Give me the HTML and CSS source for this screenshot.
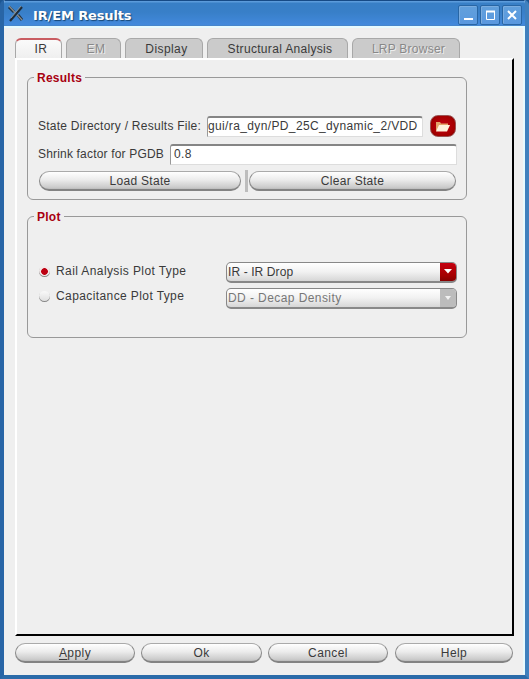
FILE: index.html
```html
<!DOCTYPE html>
<html lang="en">
<head>
<meta charset="utf-8">
<title>IR/EM Results</title>
<link rel="stylesheet" href="styles.css">
</head>
<body>
<div class="window">
  <header class="titlebar">
    <svg class="app-icon" width="18" height="18" viewBox="0 0 18 18"><path d="M2 2l5 5M11 10l4 5" stroke="#243545" stroke-width="3"/><path d="M2 1l13 14" stroke="#8a8d8c" stroke-width="1.2"/><path d="M15 2L3 16" stroke="#202c38" stroke-width="2.2"/><path d="M14 1L4 13" stroke="#9b998f" stroke-width=".8"/></svg>
    <h1>IR/EM Results</h1>
    <div class="controls">
      <button aria-label="Minimize"><svg width="18" height="18"><path d="M5 13h9" stroke="#fff" stroke-width="2"/></svg></button>
      <button aria-label="Maximize"><svg width="18" height="18"><path d="M5.5 6v7.5h8V6" fill="none" stroke="#fff"/><path d="M5 5.5h9" stroke="#fff" stroke-width="2"/></svg></button>
      <button aria-label="Close"><svg width="18" height="18"><path d="M5 5l8 8M13 5l-8 8" stroke="#fff" stroke-width="2"/></svg></button>
    </div>
  </header>
  <main>
    <nav class="tabs">
      <div class="tab ir active"><span>IR</span></div>
      <div class="tab em disabled"><span>EM</span></div>
      <div class="tab display"><span>Display</span></div>
      <div class="tab structural"><span>Structural Analysis</span></div>
      <div class="tab lrp disabled"><span>LRP Browser</span></div>
    </nav>
    <section class="pane">
      <fieldset class="results">
        <legend>Results</legend>
        <div class="row file-row"><label class="file-label">State Directory / Results File:</label><div class="input path"><span>gui/ra_dyn/PD_25C_dynamic_2/VDD</span></div>
          <button class="browse" aria-label="Browse"><svg width="16" height="13" viewBox="0 0 16 13"><path d="M1 11V2h4l1 1.5h7V6" fill="#e3a46a"/><path d="M1 11.5L4 5h11l-3 6.5z" fill="#fff1dc"/></svg></button></div>
        <div class="row shrink-row"><label class="shrink-label">Shrink factor for PGDB</label><div class="input factor">0.8</div></div>
        <div class="row action-row"><button class="pill load">Load State</button><i class="divider"></i><button class="pill clear">Clear State</button></div>
      </fieldset>
      <fieldset class="plot">
        <legend>Plot</legend>
        <div class="row plot-row"><i class="radio on"></i><label class="rail">Rail Analysis Plot Type</label><div class="combo"><span class="value">IR - IR Drop</span><b><svg width="8" height="5"><path d="M0 0h8L4 4.5z" fill="#fff"/></svg></b></div></div>
        <div class="row plot-row second"><i class="radio"></i><label class="cap">Capacitance Plot Type</label><div class="combo off"><span>DD - Decap Density</span><b><svg width="6" height="4"><path d="M0 0h6L3 4z" fill="#f2f2f2"/></svg></b></div></div>
      </fieldset>
    </section>
    <footer><button class="pill"><span><u>A</u>pply</span></button><button class="pill">Ok</button><button class="pill">Cancel</button><button class="pill">Help</button></footer>
  </main>
</div>
</body>
</html>
```
FILE: styles.css
```css
* { box-sizing: border-box; }
body { margin: 0; font: 12px/14px "Liberation Sans", sans-serif; color: #3a3a3a; letter-spacing: .42px; background: #1d5591; }
button { font: inherit; color: inherit; letter-spacing: inherit; padding: 0; border: 0; }
.window { width: 529px; height: 679px; border: solid; border-width: 0 4px 4px; border-color: #1e5b9e #3f80bd #2b6ba9 #2865a6; border-radius: 5px 5px 0 0; overflow: hidden; background: #efefef; }
.titlebar { height: 27px; display: flex; align-items: center; padding: 3px 3px 0 3px; background: linear-gradient(#164a86 0 1px, #5b9bdb 1px 2px, #387fc6 3px, #387fc8 12px, #4289dc 25px, #4a83bb 26px); }
.app-icon { display: block; position: relative; top: -1px; }
h1 { margin: 2px 0 0 8px; color: #fff; font: bold 13px/16px "DejaVu Sans", sans-serif; letter-spacing: -.13px; text-shadow: 1px 1px 1px #164674; }
.controls { margin-left: auto; display: flex; gap: 2px; margin-top: -1px; }
.controls button { width: 20px; height: 20px; border: 1px solid #2866a5; border-radius: 2px; background: linear-gradient(#62a0dc, #5998df); box-shadow: inset 1px 1px #7aacdf; }
.controls svg { display: block; }
main { height: 648px; padding: 10px 7px 0 11px; border-top: 2px solid #e6faff; border-right: 2px solid #e6faff; margin-top: -1px; }
.tabs { height: 20px; display: flex; gap: 4px; }
.tab { height: 20px; text-align: center; line-height: 20px; border: 1px solid #a8a8a8; border-bottom: 0; border-radius: 6px 6px 0 0; background: #cbcbcb; padding: 0 0 0 5px; }
.tab.active { background: linear-gradient(#fafafa, #efefef); border-top: 2px solid #c95c61; line-height: 18px; }
.tab.disabled { color: #888; text-shadow: 1px 1px #eee; }
.ir { width: 47px; }
.em { width: 55px; }
.display { width: 78px; }
.structural { width: 141px; letter-spacing: .32px; }
.lrp { width: 108px; letter-spacing: .25px; }
.pane { width: 499px; height: 578px; border: 2px solid; border-color: #fff #000 #000 #fff; padding: 10px 10px 0; background: #efefef; }
fieldset { position: relative; margin: 0; width: 440px; border: 0; padding: 0 10px 0 11px; }
fieldset::before { content: ""; position: absolute; inset: 7px 0 0; border: 1px solid #999; border-radius: 6px; pointer-events: none; }
legend { position: absolute; left: 7px; top: 1px; padding: 0 3px; font-weight: bold; color: #a80010; background: #efefef; letter-spacing: .25px; }
.results { height: 130px; padding-top: 45px; }
.plot { height: 129px; padding-top: 52px; margin-top: 9px; }
.row { display: flex; align-items: center; position: relative; }
.row label { white-space: pre; flex: none; }
.file-row { height: 22px; }
.file-label { width: 169px; letter-spacing: .25px; }
.input { height: 21px; border: 1px solid #ddd; border-top: 2px solid #858585; border-left-color: #999; border-radius: 3px 3px 0 0; background: #fff; white-space: nowrap; padding: 1px 0 0; }
.path { width: 216px; overflow: hidden; letter-spacing: .37px; }
.browse { width: 26px; height: 22px; margin-left: 7px; display: grid; place-items: center; border: 1px solid #9c5555; border-radius: 8px; background: radial-gradient(#c60014, #a40000 70%, #750000); }
.shrink-row { height: 21px; margin-top: 7px; }
.shrink-label { width: 132px; letter-spacing: .18px; position: relative; top: -1px; }
.factor { width: 287px; padding-left: 3px; }
.action-row { height: 22px; margin-top: 5px; padding-left: 1px; gap: 4px; letter-spacing: .3px; }
.pill { height: 20px; padding-top: 1px; border: 1px solid #888; border-top-color: #aaa; border-bottom: 2px solid #838383; border-radius: 10px; background: linear-gradient(#fff, #ececec 45%, #cbcbcb 90%, #bbb); line-height: 16px; text-align: center; }
.load { width: 202px; }
.divider { width: 3px; height: 22px; background: #bdbdbd; margin-right: -3px; }
.clear { width: 207px; }
.plot-row { height: 22px; margin-bottom: 4px; }
.plot-row label { width: 170px; position: relative; top: -1px; letter-spacing: .4px; }
.second label { top: -2px; }
.radio { width: 11px; height: 11px; margin: 0 6px 0 1px; border-radius: 50%; background: linear-gradient(#f9f9f9, #ddd); box-shadow: inset 0 -1px #888; position: relative; top: -1px; }
.second .radio { top: -2px; }
.radio.on { background: radial-gradient(circle, #bd0012 0 3px, #f2e9e9 3.7px); }
.combo { width: 231px; height: 21px; display: flex; justify-content: space-between; overflow: hidden; border: 1px solid #888; border-bottom: 2px solid #888; border-radius: 5px; background: linear-gradient(#fff, #f1f1f1 50%, #d6d6d6); line-height: 18px; padding-left: 1px; }
.value { letter-spacing: .1px; }
.combo b { width: 16px; display: grid; place-items: center; background: linear-gradient(#c50010, #a40000 70%, #860000); }
.combo.off { color: #777; }
.off b { background: #bcbcbc; }
footer { display: flex; margin-top: 7px; gap: 6px; }
footer .pill { width: 120px; }
footer .pill:nth-child(2) { width: 121px; }
footer .pill:nth-child(4) { width: 118px; margin-left: 1px; }
u { text-underline-offset: 2px; }
```
